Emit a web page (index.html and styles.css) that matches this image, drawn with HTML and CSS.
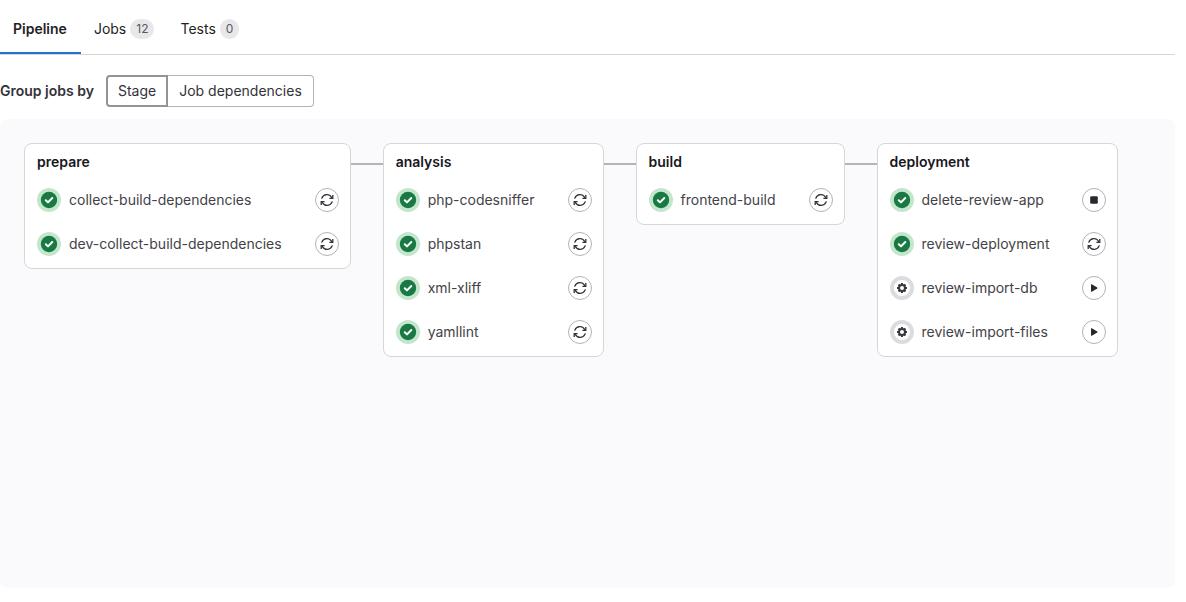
FILE: index.html
```
<!DOCTYPE html>
<html lang="en">
<head>
<meta charset="utf-8">
<title>Pipeline</title>
<link rel="stylesheet" href="styles.css">
</head>
<body>
<svg class="sprite" aria-hidden="true">
  <symbol id="success" viewBox="0 0 24 24">
    <circle cx="12" cy="12" r="12" fill="#c3e6cd"/>
    <circle cx="12" cy="12" r="8.2" fill="#187a42"/>
    <path d="M8.8 12.2l2.2 2.2 4.3-4.4" fill="none" stroke="#fff" stroke-width="2" stroke-linecap="round" stroke-linejoin="round"/>
  </symbol>
  <symbol id="manual" viewBox="0 0 24 24">
    <circle cx="12" cy="12" r="10" fill="#fff" stroke="#dcdcde" stroke-width="4"/>
    <circle cx="12" cy="12" r="3" fill="none" stroke="#3a383f" stroke-width="2"/>
    <path d="M12 7v2M12 15v2M7 12h2M15 12h2M8.5 8.5l1.3 1.3M14.2 14.2l1.3 1.3M8.5 15.5l1.3-1.3M14.2 9.8l1.3-1.3" stroke="#3a383f" stroke-width="2"/>
  </symbol>
  <symbol id="retry" viewBox="0 0 16 16">
    <path d="M2.8 6.2A5.4 5.4 0 0 1 12.6 5.4M13.2 9.800A5.400 5.400 0 0 1 3.400 10.600" fill="none" stroke="#333238" stroke-width="1.2" stroke-linecap="round"/>
    <path d="M13.800 3v3.400H10.400M2.200 13V9.600H5.600" fill="none" stroke="#333238" stroke-width="1.3"/>
  </symbol>
  <symbol id="play" viewBox="0 0 16 16">
    <path d="M5 4.8v6.4q0 .9.8.5l5.4-3.2q.8-.5 0-1L5.8 4.3Q5 3.9 5 4.8z" fill="#28272d"/>
  </symbol>
  <symbol id="stop" viewBox="0 0 16 16">
    <rect x="4.2" y="4.200" width="7.600" height="7.600" rx="1.300" fill="#28272d"/>
  </symbol>
</svg>

<main class="page">
  <nav class="tabs" aria-label="Pipeline views">
    <a class="tab tab-active" href="#pipeline" aria-current="page">Pipeline</a>
    <a class="tab" href="#jobs">Jobs <span class="badge">12</span></a>
    <a class="tab" href="#tests">Tests <span class="badge">0</span></a>
  </nav>

  <div class="grouping" role="group" aria-labelledby="group-label">
    <span class="group-label" id="group-label">Group jobs by</span>
    <div class="segmented">
      <button class="segment segment-selected" type="button" aria-pressed="true">Stage</button>
      <button class="segment" type="button" aria-pressed="false">Job dependencies</button>
    </div>
  </div>

  <div class="graph" id="pipeline">
    <section class="stage">
      <h2 class="stage-title">prepare</h2>
      <ul class="jobs">
        <li class="job"><svg class="status"><use href="#success"/></svg><a class="job-name" href="#j1">collect-build-dependencies</a><button class="action" type="button" aria-label="Retry"><svg class="icon"><use href="#retry"/></svg></button></li>
        <li class="job"><svg class="status"><use href="#success"/></svg><a class="job-name" href="#j2">dev-collect-build-dependencies</a><button class="action" type="button" aria-label="Retry"><svg class="icon"><use href="#retry"/></svg></button></li>
      </ul>
    </section>
    <span class="connector"></span>
    <section class="stage">
      <h2 class="stage-title">analysis</h2>
      <ul class="jobs">
        <li class="job"><svg class="status"><use href="#success"/></svg><a class="job-name" href="#j3">php-codesniffer</a><button class="action" type="button" aria-label="Retry"><svg class="icon"><use href="#retry"/></svg></button></li>
        <li class="job"><svg class="status"><use href="#success"/></svg><a class="job-name" href="#j4">phpstan</a><button class="action" type="button" aria-label="Retry"><svg class="icon"><use href="#retry"/></svg></button></li>
        <li class="job"><svg class="status"><use href="#success"/></svg><a class="job-name" href="#j5">xml-xliff</a><button class="action" type="button" aria-label="Retry"><svg class="icon"><use href="#retry"/></svg></button></li>
        <li class="job"><svg class="status"><use href="#success"/></svg><a class="job-name" href="#j6">yamllint</a><button class="action" type="button" aria-label="Retry"><svg class="icon"><use href="#retry"/></svg></button></li>
      </ul>
    </section>
    <span class="connector"></span>
    <section class="stage">
      <h2 class="stage-title">build</h2>
      <ul class="jobs">
        <li class="job"><svg class="status"><use href="#success"/></svg><a class="job-name" href="#j7">frontend-build</a><button class="action" type="button" aria-label="Retry"><svg class="icon"><use href="#retry"/></svg></button></li>
      </ul>
    </section>
    <span class="connector"></span>
    <section class="stage">
      <h2 class="stage-title">deployment</h2>
      <ul class="jobs">
        <li class="job"><svg class="status"><use href="#success"/></svg><a class="job-name" href="#j8">delete-review-app</a><button class="action" type="button" aria-label="Stop"><svg class="icon"><use href="#stop"/></svg></button></li>
        <li class="job"><svg class="status"><use href="#success"/></svg><a class="job-name" href="#j9">review-deployment</a><button class="action" type="button" aria-label="Retry"><svg class="icon"><use href="#retry"/></svg></button></li>
        <li class="job"><svg class="status"><use href="#manual"/></svg><a class="job-name" href="#j10">review-import-db</a><button class="action" type="button" aria-label="Run"><svg class="icon"><use href="#play"/></svg></button></li>
        <li class="job"><svg class="status"><use href="#manual"/></svg><a class="job-name" href="#j11">review-import-files</a><button class="action" type="button" aria-label="Run"><svg class="icon"><use href="#play"/></svg></button></li>
      </ul>
    </section>
  </div>
</main>
</body>
</html>
```

FILE: styles.css
```
* {
  box-sizing: border-box;
}

body {
  margin: 0;
  background: #fff;
  color: #333238;
  font: 14px/20px Inter, "Noto Sans", sans-serif;
}

.sprite {
  display: none;
}

.page {
  display: flex;
  flex-direction: column;
  min-height: 100vh;
  padding: 4px 11px 14px 0;
}

.tabs {
  display: flex;
  border-bottom: 1px solid #d6d6d8;
}

.tab {
  display: flex;
  align-items: center;
  gap: 4px;
  height: 50px;
  padding: 0 13px;
  color: #1f1e24;
  text-decoration: none;
}

.tab-active {
  padding-right: 14px;
  font-weight: 600;
  box-shadow: inset 0 -2px #1f75cb;
}

.badge {
  padding: 2px 6px;
  border-radius: 10px;
  background: #e8e8ea;
  color: #59585f;
  font-size: 12px;
  line-height: 16px;
}

.grouping {
  display: flex;
  align-items: center;
  gap: 12px;
  padding: 20px 0 12px;
}

.group-label {
  font-weight: 600;
}

.segmented {
  display: flex;
}

.segment {
  height: 32px;
  padding: 0 11px;
  border: 1px solid #b3b2b8;
  border-left: 0;
  border-radius: 0 4px 4px 0;
  background: #fff;
  color: #333238;
  font: inherit;
}

.segment-selected {
  padding: 0 10px;
  border: 2px solid #949398;
  border-radius: 4px 0 0 4px;
}

.graph {
  display: flex;
  flex: 1;
  align-items: flex-start;
  padding: 24px;
  border-radius: 8px;
  background: #fafafc;
}

.stage {
  padding: 8px 11px 12px 12px;
  border: 1px solid #d6d6d9;
  border-radius: 8px;
  background: #fff;
}

.stage-title {
  margin: 0 0 16px;
  color: #18171d;
  font-size: 14px;
  font-weight: 600;
  line-height: 20px;
}

.connector {
  width: 32px;
  height: 2px;
  margin-top: 20px;
  background: #b5b4b9;
}

.jobs {
  display: grid;
  gap: 20px;
  margin: 0;
  padding: 0;
  list-style: none;
}

.job {
  display: flex;
  align-items: center;
  gap: 8px;
}

.status {
  flex: none;
  width: 24px;
  height: 24px;
}

.job-name {
  flex: 1;
  padding-right: 25px;
  color: #434248;
  text-decoration: none;
  white-space: nowrap;
}

.action {
  display: grid;
  place-items: center;
  width: 24px;
  height: 24px;
  padding: 0;
  border: 1px solid #b3b2b8;
  border-radius: 50%;
  background: #fff;
}

.icon {
  width: 16px;
  height: 16px;
}
```
